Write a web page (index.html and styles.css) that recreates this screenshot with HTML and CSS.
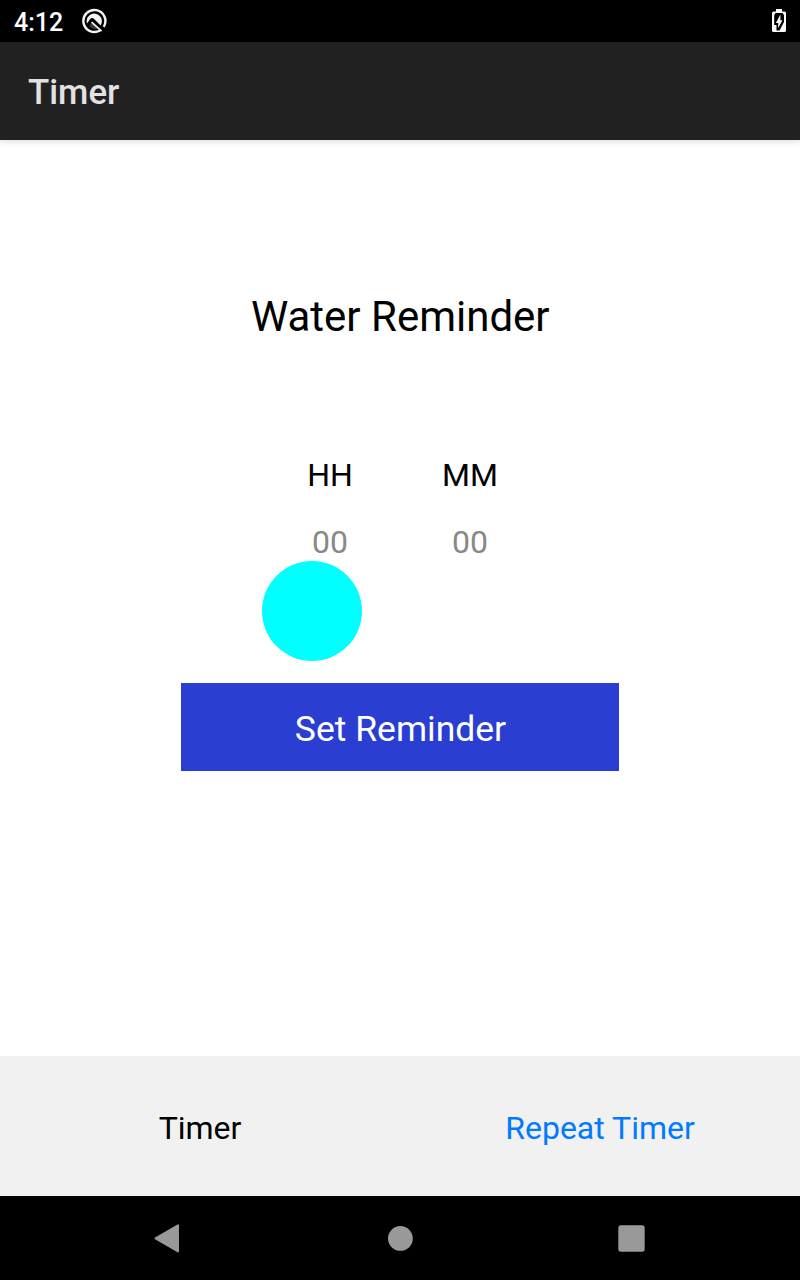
FILE: index.html
```html
<!DOCTYPE html>
<html lang="en">
<head>
<meta charset="utf-8">
<title>Timer</title>
<link rel="stylesheet" href="styles.css">
</head>
<body>
<div class="status">
  <span class="clock">4:12</span>
  <svg class="notice" width="26" height="26" viewBox="0 0 26 26">
    <path d="M19.2 22.3A11 11 0 1 1 22.7 18.8" fill="none" stroke="#f4f4f4" stroke-width="2.4"/>
    <path d="M6 15.4A7.6 7.6 0 1 1 19.6 17.4L12.6 10.6Q10.6 9.4 9 11.2Z" fill="#f4f4f4"/>
    <path d="M8 17.8L11 14.8L17.2 20.4Q12 22.4 8 17.8Z" fill="#3a3a3a"/>
    <path d="M10.6 14.2L20.6 23.2" fill="none" stroke="#f4f4f4" stroke-width="1.7"/>
  </svg>
  <svg class="battery" width="14" height="23" viewBox="0 0 14 23">
    <path d="M4 0H10V2.5H12.5Q14 2.5 14 4V21.5Q14 23 12.5 23H1.5Q0 23 0 21.5V4Q0 2.5 1.5 2.5H4Z" fill="#fff"/>
    <path d="M3.5 4H10.5L12 6V13L7.5 21.5H4.5V16H2.2V6Z" fill="#000"/>
    <path d="M8.4 5.5V11.3H10.4L6.2 19.2V13.9H3.9Z" fill="#fff"/>
  </svg>
</div>
<header class="bar">Timer</header>
<main class="content">
  <h1 class="title">Water Reminder</h1>
  <div class="fields">
    <div class="field"><span>HH</span><span class="value">00</span></div>
    <div class="field"><span>MM</span><span class="value">00</span></div>
  </div>
  <div class="handle"></div>
  <button class="set">Set Reminder</button>
</main>
<nav class="tabs">
  <span class="tab">Timer</span>
  <span class="tab link">Repeat Timer</span>
</nav>
<footer class="system">
  <svg width="800" height="84" viewBox="0 0 800 84">
    <path d="M155.5 42.4L178 29.4V55.4Z" fill="#999" stroke="#999" stroke-width="2" stroke-linejoin="round"/>
    <circle cx="400.4" cy="42.4" r="12.4" fill="#999"/>
    <rect x="618.3" y="29.3" width="26.4" height="26.4" rx="2.6" fill="#999"/>
  </svg>
</footer>
</body>
</html>
```
FILE: styles.css
```css
* { box-sizing: border-box; }
body {
  margin: 0;
  width: 800px;
  height: 1280px;
  display: flex;
  flex-direction: column;
  overflow: hidden;
  background: #fff;
  color: #000;
  font-family: Roboto, "Liberation Sans", sans-serif;
}
.status {
  height: 42px;
  background: #000;
  color: #fff;
  display: flex;
  padding: 8px 14px 0;
}
.clock { width: 67px; font-size: 25px; font-weight: 500; line-height: 30px; }
.battery { margin: 1px 0 0 auto; }
.bar {
  height: 98px;
  padding: 1px 28px 0;
  background: #212121;
  color: #e2e2e2;
  font-size: 34.8px;
  font-weight: 500;
  line-height: 98px;
  box-shadow: 0 1px 7px rgba(0, 0, 0, 0.16);
}
.content {
  height: 916px;
  display: flex;
  flex-direction: column;
  align-items: center;
}
.title { margin: 152px 0 0; padding-left: 0.5px; font-size: 42px; font-weight: 400; line-height: 50px; }
.fields { display: flex; margin-top: 113px; }
.field {
  width: 140px;
  display: flex;
  flex-direction: column;
  align-items: center;
  font-size: 32px;
  line-height: 40px;
}
.value { margin-top: 27px; color: #888; }
.handle {
  width: 100px;
  height: 100px;
  margin: -1px 176px 0 0;
  border-radius: 50%;
  background: #0ff;
}
.set {
  width: 438px;
  height: 88px;
  margin-top: 22px;
  padding: 5px 0 0 1px;
  border: 0;
  background: #2a3ed2;
  color: #fff;
  font: 400 35.5px/41px Roboto, "Liberation Sans", sans-serif;
}
.tabs {
  height: 140px;
  display: flex;
  background: #f1f1f1;
  font-size: 32px;
  line-height: 145px;
}
.tab { width: 50%; text-align: center; }
.link { color: #007aff; }
.system { height: 84px; background: #000; }
.system svg { display: block; }
```
